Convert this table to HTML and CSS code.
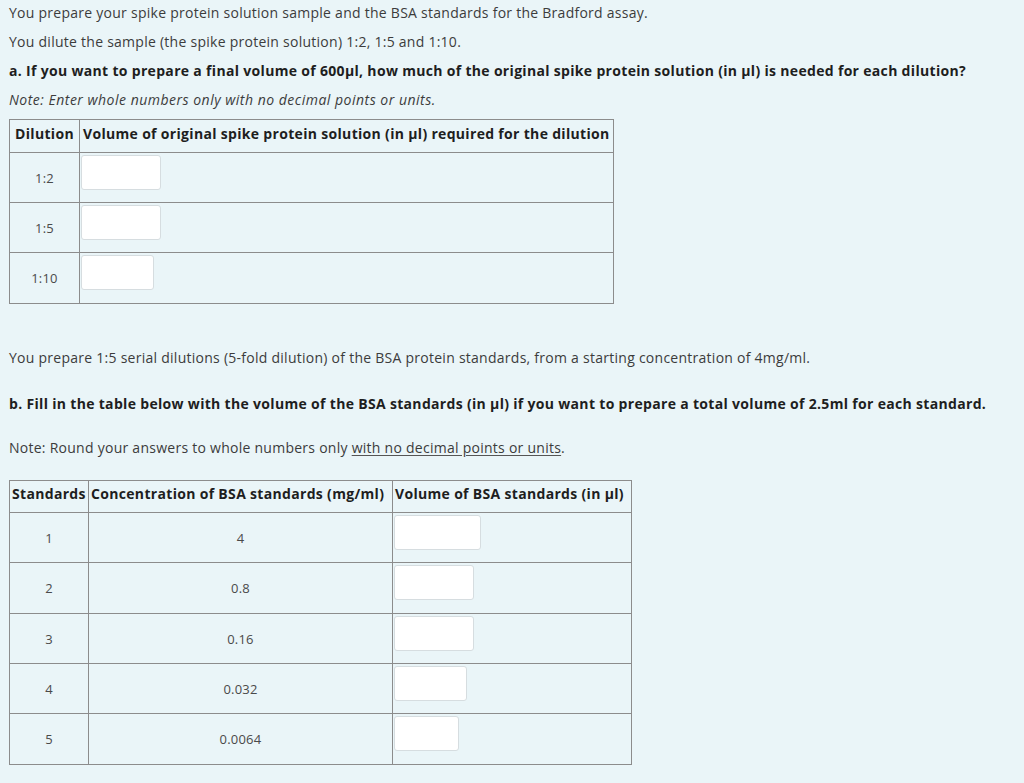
FILE: index.html
```html
<!DOCTYPE html>
<html>
<head>
<meta charset="utf-8">
<link rel="stylesheet" href="styles.css">
</head>
<body>
<div class="page">
  <p class="line first">You prepare your spike protein solution sample and the BSA standards for the Bradford assay.</p>
  <p class="line">You dilute the sample (the spike protein solution) 1:2, 1:5 and 1:10.</p>
  <p class="line strong">a. If you want to prepare a final volume of 600µl, how much of the original spike protein solution (in µl) is needed for each dilution?</p>
  <p class="line note">Note: Enter whole numbers only with no decimal points or units.</p>

  <table class="grid grid-a">
    <colgroup><col class="c-dil"><col class="c-vol"></colgroup>
    <thead>
      <tr><th class="center">Dilution</th><th>Volume of original spike protein solution (in µl) required for the dilution</th></tr>
    </thead>
    <tbody>
      <tr><td class="num">1:2</td><td class="inp"><input type="text" class="box w79"></td></tr>
      <tr><td class="num">1:5</td><td class="inp"><input type="text" class="box w79"></td></tr>
      <tr class="tall"><td class="num">1:10</td><td class="inp"><input type="text" class="box w72"></td></tr>
    </tbody>
  </table>

  <p class="line serial">You prepare 1:5 serial dilutions (5-fold dilution) of the BSA protein standards, from a starting concentration of 4mg/ml.</p>
  <p class="line strong part-b">b. Fill in the table below with the volume of the BSA standards (in µl) if you want to prepare a total volume of 2.5ml for each standard.</p>
  <p class="line round">Note: Round your answers to whole numbers only <u>with no decimal points or units</u>.</p>

  <table class="grid grid-b">
    <colgroup><col class="c-std"><col class="c-conc"><col class="c-bvol"></colgroup>
    <thead>
      <tr><th>Standards</th><th>Concentration of BSA standards (mg/ml)</th><th>Volume of BSA standards (in µl)</th></tr>
    </thead>
    <tbody>
      <tr><td class="num">1</td><td class="num">4</td><td class="inp"><input type="text" class="box w86"></td></tr>
      <tr class="tall"><td class="num">2</td><td class="num">0.8</td><td class="inp"><input type="text" class="box w79"></td></tr>
      <tr><td class="num">3</td><td class="num">0.16</td><td class="inp"><input type="text" class="box w79"></td></tr>
      <tr><td class="num">4</td><td class="num">0.032</td><td class="inp"><input type="text" class="box w73"></td></tr>
      <tr class="tall"><td class="num">5</td><td class="num">0.0064</td><td class="inp"><input type="text" class="box w64"></td></tr>
    </tbody>
  </table>
</div>
</body>
</html>
```

FILE: styles.css
```css
html, body {
  margin: 0;
  padding: 0;
  background: #eaf5f8;
}
body {
  font-family: "Open Sans", "Noto Sans", sans-serif;
  font-size: 14px;
  letter-spacing: 0.26px;
  color: #3c3c3c;
  height: 783px;
  overflow: hidden;
}
.page {
  padding: 3px 0 0 9px;
}
.line {
  margin: 0 0 9px 0;
  line-height: 20px;
  white-space: nowrap;
}
.strong {
  font-weight: 700;
  color: #1e1e1e;
  letter-spacing: 0.32px;
}
.note {
  font-style: italic;
  letter-spacing: 0.5px;
}
.serial {
  margin-top: 44px;
  margin-bottom: 26px;
}
.part-b {
  margin-bottom: 24px;
}
.round {
  margin-bottom: 22px;
}
.round u {
  text-decoration-color: #555;
  text-underline-offset: 2px;
}
.grid {
  border-collapse: collapse;
  border: 1px solid #8c8c8c;
  table-layout: fixed;
}
.grid-a { width: 604px; }
.grid-b { width: 622px; }
.grid th, .grid td {
  border: 1px solid #8c8c8c;
  padding: 0;
}
.grid th {
  font-weight: 700;
  color: #1e1e1e;
  text-align: left;
  vertical-align: top;
  line-height: 20px;
  padding: 4px 0 0 3px;
  white-space: nowrap;
  letter-spacing: 0.32px;
  overflow: visible;
}
.grid th.center {
  text-align: center;
  padding-left: 0;
}
.grid-b th {
  padding-top: 3px;
  padding-left: 2px;
}
.grid-a thead tr { height: 33px; }
.grid-a tbody tr { height: 50px; }
.grid-b thead tr { height: 32px; }
.grid-b tbody tr { height: 50px; }
.grid tbody tr.tall { height: 51px; }
.c-dil { width: 70px; }
.c-vol { width: 534px; }
.c-std { width: 79px; }
.c-conc { width: 304px; }
.c-bvol { width: 239px; }
.num {
  text-align: center;
  vertical-align: middle;
  font-size: 13px;
  letter-spacing: 0.2px;
  color: #4a4a4a;
}
.inp {
  vertical-align: top;
  padding: 2px 0 0 1px !important;
}
.box {
  display: block;
  box-sizing: border-box;
  height: 35px;
  border: 1px solid #d6dde0;
  border-radius: 3px;
  background: #fff;
  margin: 0;
  padding: 0;
}
.w86 { width: 87px; }
.w79 { width: 80px; }
.w73 { width: 73px; }
.w72 { width: 73px; }
.w64 { width: 65px; }
```
